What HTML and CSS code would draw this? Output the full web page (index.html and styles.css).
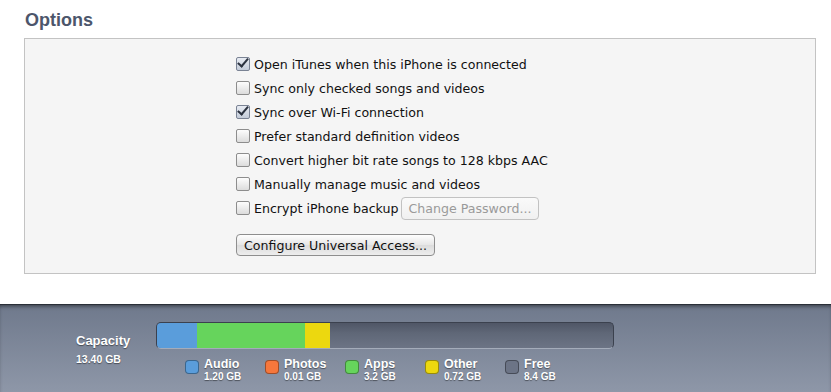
FILE: index.html
```html
<!DOCTYPE html>
<html lang="en">
<head>
  <meta charset="UTF-8">
  <title>iPhone Summary</title>
  <link rel="stylesheet" href="styles.css">
</head>
<body>
  <div class="main">
    <h2 class="section-title">Options</h2>
    <div class="options-box">
      <div class="options-list">
        <label class="opt"><span class="box checked"></span>Open iTunes when this iPhone is connected</label>
        <label class="opt"><span class="box"></span>Sync only checked songs and videos</label>
        <label class="opt"><span class="box checked"></span>Sync over Wi-Fi connection</label>
        <label class="opt"><span class="box"></span>Prefer standard definition videos</label>
        <label class="opt"><span class="box"></span>Convert higher bit rate songs to 128 kbps AAC</label>
        <label class="opt"><span class="box"></span>Manually manage music and videos</label>
        <label class="opt"><span class="box"></span>Encrypt iPhone backup <button class="btn disabled">Change Password...</button></label>
        <div class="access-row">
          <button class="btn">Configure Universal Access...</button>
        </div>
      </div>
    </div>
  </div>

  <div class="capacity-bar">
    <div class="cap-label">
      <div class="cap-title">Capacity</div>
      <div class="cap-size">13.40 GB</div>
    </div>
    <div class="cap-right">
      <div class="meter">
        <div class="seg audio" style="width: 40px"></div>
        <div class="seg photos" style="width: 0px"></div>
        <div class="seg apps" style="width: 108px"></div>
        <div class="seg other" style="width: 25px"></div>
      </div>
      <div class="legend">
        <div class="key"><span class="sw audio"></span><div><div class="k-name">Audio</div><div class="k-val">1.20 GB</div></div></div>
        <div class="key"><span class="sw photos"></span><div><div class="k-name">Photos</div><div class="k-val">0.01 GB</div></div></div>
        <div class="key"><span class="sw apps"></span><div><div class="k-name">Apps</div><div class="k-val">3.2 GB</div></div></div>
        <div class="key"><span class="sw other"></span><div><div class="k-name">Other</div><div class="k-val">0.72 GB</div></div></div>
        <div class="key"><span class="sw free"></span><div><div class="k-name">Free</div><div class="k-val">8.4 GB</div></div></div>
      </div>
    </div>
  </div>
</body>
</html>
```

FILE: styles.css
```css
html, body {
  margin: 0;
  padding: 0;
  width: 831px;
  height: 392px;
  overflow: hidden;
  background: #fff;
  font-family: "DejaVu Sans", "Liberation Sans", sans-serif;
}

.main {
  height: 304px;
  padding: 0 15px 0 24px;
  box-sizing: border-box;
}

.section-title {
  margin: 0;
  padding: 10px 0 0 1px;
  height: 38px;
  box-sizing: border-box;
  font-family: "Liberation Sans", Arial, sans-serif;
  font-size: 18px;
  line-height: 20px;
  font-weight: bold;
  color: #4c566b;
}

.options-box {
  height: 236px;
  box-sizing: border-box;
  background: #f5f5f5;
  border: 1px solid #c3c3c3;
  padding: 13px 0 0 211px;
}

.options-list {
  display: flex;
  flex-direction: column;
}

.opt {
  display: flex;
  align-items: center;
  height: 24px;
  font-size: 12.6px;
  color: #111;
}

.box {
  width: 12px;
  height: 12px;
  margin-right: 4px;
  border: 1px solid #8d8d8d;
  border-radius: 2px;
  background: linear-gradient(#fdfdfd, #dcdcdc);
  position: relative;
  flex: none;
}

.box.checked {
  background: linear-gradient(#e8ecf3, #c4ccd9);
  border-color: #7a8394;
}

.box.checked::after {
  content: "";
  position: absolute;
  left: 3px;
  top: -2px;
  width: 4px;
  height: 9px;
  border: solid #2c3340;
  border-width: 0 2px 2px 0;
  transform: rotate(40deg);
}

.btn {
  font-family: inherit;
  font-size: 12.6px;
  color: #111;
  height: 22px;
  padding: 0 7px;
  border: 1px solid #8e8e8e;
  border-radius: 4px;
  background: linear-gradient(#ffffff, #e6e6e6 50%, #dcdcdc 51%, #ededed);
}

.btn.disabled {
  margin-left: 3px;
  height: 23px;
  padding: 0 6px;
  color: #9a9a9a;
  border-color: #c2c2c2;
  background: linear-gradient(#fafafa, #f0f0f0);
}

.access-row {
  padding-top: 14px;
}

.capacity-bar {
  height: 88px;
  box-sizing: border-box;
  border-top: 1px solid #2a2f38;
  box-shadow: inset 0 3px 4px -2px rgba(0, 0, 0, 0.55);
  background: linear-gradient(#6f798c, #8e97a8);
  display: flex;
  padding: 17px 0 0 76px;
  color: #fff;
  font-family: "Liberation Sans", Arial, sans-serif;
  font-weight: bold;
  text-shadow: 0 1px 1px rgba(0, 0, 0, 0.45);
}

.cap-label {
  width: 80px;
  padding-top: 11px;
}

.cap-title {
  font-size: 13px;
}

.cap-size {
  font-size: 10.5px;
  margin-top: 5px;
}

.meter {
  width: 458px;
  height: 27px;
  box-sizing: border-box;
  border-radius: 5px;
  border: 1px solid #3b414e;
  border-bottom-color: #a4acba;
  background: linear-gradient(#4f5666, #5f6777 40%, #6c7485);
  display: flex;
  overflow: hidden;
}

.seg {
  height: 100%;
}

.audio { background: #5a9ddb; }
.photos { background: #f6773c; }
.apps { background: #66d45c; }
.other { background: #ecd80f; }
.free { background: #6c7486; }

.legend {
  display: flex;
  padding: 8px 0 0 29px;
}

.key {
  width: 80px;
  display: flex;
  align-items: flex-start;
}

.sw {
  width: 12px;
  height: 12px;
  margin: 3px 5px 0 0;
  border: 1px solid rgba(0, 0, 0, 0.35);
  border-radius: 4px;
  flex: none;
}

.k-name {
  font-size: 12.5px;
  line-height: 14px;
}

.k-val {
  font-size: 10px;
  line-height: 12px;
}
```
